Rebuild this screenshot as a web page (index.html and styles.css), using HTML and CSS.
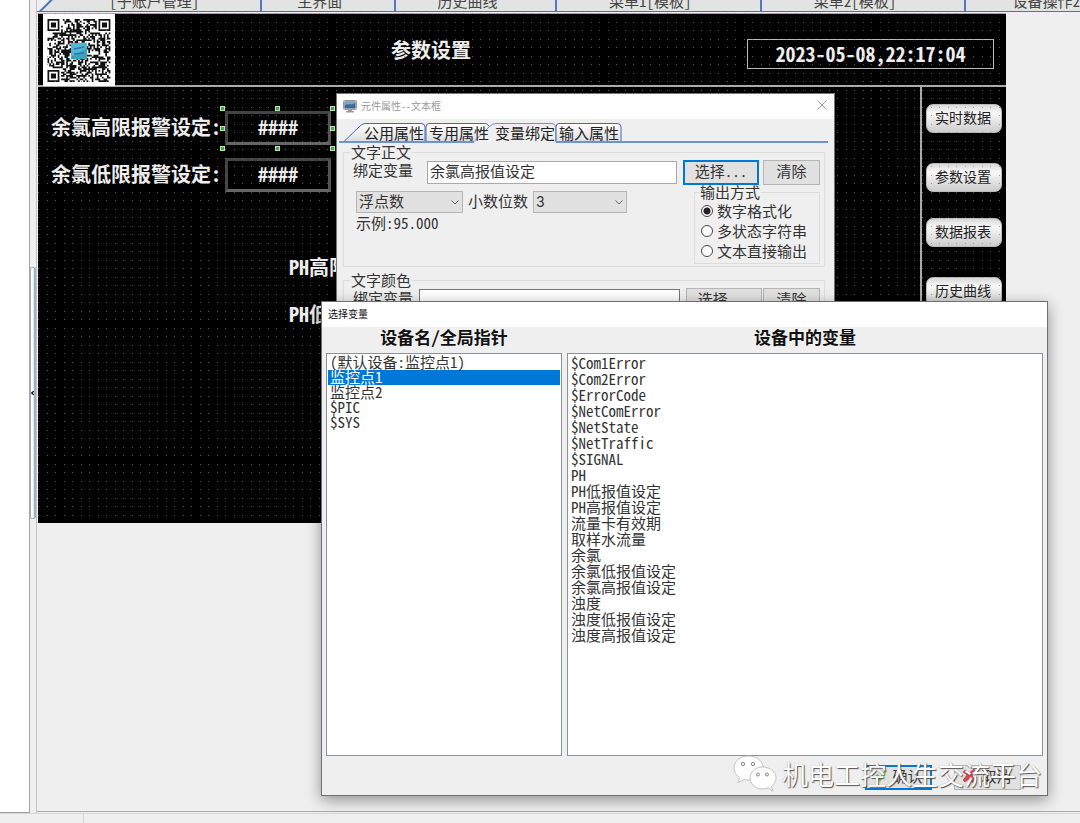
FILE: index.html
```html
<!DOCTYPE html>
<html lang="zh-CN">
<head>
<meta charset="utf-8">
<title>参数设置</title>
<link rel="stylesheet" href="styles.css">
</head>
<body>
<div class="app">
  <div class="workspace">
    <aside class="tree-panel"></aside>
    <div class="splitter"><div class="splitter-thumb"><svg width="5" height="8" viewBox="0 0 5 8"><path d="M4.500 1L1 4l3.500 3" fill="none" stroke="#000" stroke-width="1.800"/></svg></div></div>
    <main class="editor">
      <nav class="page-tabs">
        <a class="page-tab first" href="#">[子账户管理]</a>
        <a class="page-tab" href="#">主界面</a>
        <a class="page-tab" href="#">历史曲线</a>
        <a class="page-tab" href="#">菜单1[模板]</a>
        <a class="page-tab" href="#">菜单2[模板]</a>
        <a class="page-tab last" href="#">设备操作2</a>
      </nav>
      <section class="canvas">
        <header class="canvas-head">
          <svg class="qr" viewBox="0 0 72 72">
            <rect width="72" height="72" fill="#fff"/>
            <path id="qr-modules" transform="translate(4.500 5) scale(1.700)" fill="#111"/>
            <rect x="28" y="29" width="16" height="16" fill="#35a3c4"/>
            <path d="M28 29h16v5L28 43z" fill="#4fb9d3"/>
            <path d="M31 35l10-2M31 40l10-1" stroke="#3770b0" stroke-width="1.500"/>
            <rect x="29" y="42" width="1.500" height="1.500" fill="#d0437e"/>
          </svg>
          <h1 class="canvas-title">参数设置</h1>
          <time class="clock">2023-05-08,22:17:04</time>
        </header>
        <div class="canvas-body">
          <div class="fields">
            <div class="field"><span>余氯高限报警设定:</span>
              <output class="value">####
                <i class="handle t l"></i><i class="handle t c"></i><i class="handle t r"></i>
                <i class="handle m l"></i><i class="handle m r"></i>
                <i class="handle b l"></i><i class="handle b c"></i><i class="handle b r"></i>
              </output></div>
            <div class="field"><span>余氯低限报警设定:</span><output class="value">####</output></div>
            <div class="field ph"><span>PH高限报警设定:</span></div>
            <div class="field ph"><span>PH低限报警设定:</span></div>
          </div>
          <aside class="side-menu">
            <div class="side-group"><button class="side-btn">实时数据</button><button class="side-btn">参数设置</button></div>
            <div class="side-group"><button class="side-btn">数据报表</button><button class="side-btn">历史曲线</button></div>
          </aside>
        </div>
        <svg class="grid-dots" width="100%" height="100%" shape-rendering="crispEdges">
          <defs><pattern id="dots" width="17" height="17" patternUnits="userSpaceOnUse"><path d="M0 0h1v1h-1zM9 0h1v1h-1zM0 9h1v1h-1zM9 9h1v1h-1z" fill="#808080" fill-opacity=".7"/></pattern></defs>
          <rect width="100%" height="100%" fill="url(#dots)"/>
        </svg>
      </section>
    </main>
  </div>
  <footer class="statusbar"><span class="status-cell"></span></footer>
</div>

<section class="window props" aria-label="元件属性--文本框">
  <header class="titlebar muted">
    <svg width="14" height="13" viewBox="0 0 14 13"><rect x=".5" y=".5" width="13" height="9" rx="1" fill="#d8d8d8" stroke="#999"/><rect x="2" y="2" width="10" height="6" fill="#3f6f9f" stroke="#29496b" stroke-width=".7"/><path d="M2 5C5 3 8 5.500 12 3V2H2z" fill="#7fa6ca"/><path d="M5 10h4v1h2v1.500H3V11h2z" fill="#999"/></svg>
    <span>元件属性--文本框</span>
    <button class="close" aria-label="关闭"><svg width="10" height="10" viewBox="0 0 10 10"><path d="M.5.5l9 9M9.500.5l-9 9" stroke="#999" fill="none"/></svg></button>
  </header>
  <div class="tabstrip">
    <svg class="tab-shapes" width="492" height="21" viewBox="0 0 492 21">
      <defs><linearGradient id="tabfill" x2="0" y2="1"><stop offset="0" stop-color="#fff"/><stop offset="1" stop-color="#ddd"/></linearGradient></defs>
      <path d="M7 19L22 4Q25 .5 28 .5H84Q88 .5 88 4V19z" fill="url(#tabfill)"/>
      <path d="M89 19V4Q89 .5 92 .5H152L137 19z" fill="url(#tabfill)"/>
      <path d="M219 19V4Q219 .5 222 .5H280Q284 .5 284 4V19z" fill="url(#tabfill)"/>
      <path d="M2 18.500H7L22 4Q25 .5 28 .5H84Q88 .5 88 4V18.500M89 18.500V4Q89 .5 92 .5H149L152 3M219 18.500V4Q219 .5 222 .5H280Q284 .5 284 4V18.500" fill="none" stroke="#4169b5"/>
      <path d="M137 18.500L152 4Q155 .5 159 .5H214Q218.500 .5 218.500 4V18.500" fill="#efefef" stroke="#6f93d2"/>
      <path d="M2 19H137M219 19H491" stroke="#6f93cf" stroke-width="2"/>
    </svg>
    <button class="tab">公用属性</button><button class="tab">专用属性</button><button class="tab active">变量绑定</button><button class="tab">输入属性</button>
  </div>
  <div class="props-body">
    <fieldset class="group">
      <legend>文字正文</legend>
      <div class="bind-row">
        <label for="bind-text">绑定变量</label>
        <input id="bind-text" class="textbox" value="余氯高报值设定">
        <button class="btn choose focus">选择...</button>
        <button class="btn clear">清除</button>
      </div>
      <div class="format-row">
        <div class="format-left">
          <div class="select-row">
            <span class="combo wide"><select aria-label="数据类型"><option>浮点数</option></select><svg width="8" height="5" viewBox="0 0 8 5"><path d="M.5.5L4 4 7.500.5" fill="none" stroke="#666"/></svg></span>
            <label for="digits">小数位数</label>
            <span class="combo"><select id="digits" class="digits"><option>3</option></select><svg width="8" height="5" viewBox="0 0 8 5"><path d="M.5.5L4 4 7.500.5" fill="none" stroke="#666"/></svg></span>
          </div>
          <p class="sample">示例:95.000</p>
        </div>
        <fieldset class="group output">
          <legend>输出方式</legend>
          <label class="radio"><input type="radio" name="out" checked>数字格式化</label>
          <label class="radio"><input type="radio" name="out">多状态字符串</label>
          <label class="radio"><input type="radio" name="out">文本直接输出</label>
        </fieldset>
      </div>
    </fieldset>
    <fieldset class="group color">
      <legend>文字颜色</legend>
      <div class="bind-row">
        <label for="bind-color">绑定变量</label>
        <input id="bind-color" class="textbox">
        <button class="btn choose">选择...</button>
        <button class="btn clear">清除</button>
      </div>
    </fieldset>
  </div>
</section>

<section class="window picker" aria-label="选择变量">
  <header class="titlebar"><span>选择变量</span></header>
  <div class="picker-body">
    <h2 class="list-title">设备名/全局指针</h2>
    <h2 class="list-title">设备中的变量</h2>
    <ul class="listbox devices" role="listbox">
      <li>(默认设备:监控点1)</li><li class="selected">监控点1</li><li>监控点2</li><li>$PIC</li><li>$SYS</li>
    </ul>
    <ul class="listbox variables" role="listbox">
      <li>$Com1Error</li><li>$Com2Error</li><li>$ErrorCode</li><li>$NetComError</li><li>$NetState</li><li>$NetTraffic</li><li>$SIGNAL</li><li>PH</li><li>PH低报值设定</li><li>PH高报值设定</li><li>流量卡有效期</li><li>取样水流量</li><li>余氯</li><li>余氯低报值设定</li><li>余氯高报值设定</li><li>浊度</li><li>浊度低报值设定</li><li>浊度高报值设定</li>
    </ul>
  </div>
  <footer class="picker-foot">
    <button class="btn action focus"><svg width="14" height="14" viewBox="0 0 14 14"><path d="M1 7l3-2 2 3 5-7 2 1-7 11z" fill="#4fc34a"/></svg>确认</button>
    <button class="btn action"><svg width="14" height="14" viewBox="0 0 14 14"><path d="M2 1l4 3 5-4 2 3-4 4 4 4-3 3-4-4-4 3-2-2 4-5-4-3z" fill="#d64550" stroke="#b62f3b" stroke-width=".6"/></svg>取消</button>
  </footer>
  <div class="watermark">
    <svg width="44" height="38" viewBox="0 0 44 38">
      <g fill="#fff" stroke="#aaa" stroke-width=".7"><path d="M15 1C7 1 1 6.500 1 13c0 4 2 7 5.500 9.500L5 27.500l6-3q3 .8 7 .6C30 24 31 18 30 11 28 4 22 1 15 1z"/><path d="M29.500 12C22 12 17 17 17 23s5.500 11 12.500 11q3 0 5.500-1l5 3-1.500-4.500C41 29.500 43 26.500 43 23c0-6-6-11-13.500-11z"/></g>
      <g fill="#eee" stroke="#888"><circle cx="10" cy="9" r="1.700"/><circle cx="20" cy="9" r="1.700"/><circle cx="25" cy="19.500" r="1.500"/><circle cx="34" cy="19.500" r="1.500"/></g>
    </svg>
    <span>机电工控人生交流平台</span>
  </div>
</section>
<script src="qr.js"></script>
</body>
</html>
```

FILE: qr.js
```js
// Fills the code area with modules and three corner finders.
(function () {
  var n = 37, seed = 20230508, d = '';
  function rand() {
    seed = (seed + 0x6D2B79F5) | 0;
    var t = Math.imul(seed ^ (seed >>> 15), 1 | seed);
    t = (t + Math.imul(t ^ (t >>> 7), 61 | t)) ^ t;
    return ((t ^ (t >>> 14)) >>> 0) / 4294967296;
  }
  function finder(x, y, ox, oy) {
    var dx = x - ox, dy = y - oy;
    if (dx < -1 || dy < -1 || dx > 7 || dy > 7) return null;
    if (dx < 0 || dy < 0 || dx > 6 || dy > 6) return false;
    var r = Math.max(Math.abs(dx - 3), Math.abs(dy - 3));
    return r === 3 || r < 2;
  }
  for (var y = 0; y < n; y++) {
    for (var x = 0; x < n; x++) {
      var on = rand() > 0.48;
      var r = Math.max(Math.abs(x - n + 7), Math.abs(y - n + 7));
      if (r < 3) on = r !== 1;
      [[0, 0], [n - 7, 0], [0, n - 7]].forEach(function (p) {
        var f = finder(x, y, p[0], p[1]);
        if (f !== null) on = f;
      });
      if (on) d += 'M' + x + ' ' + y + 'h1v1h-1z';
    }
  }
  document.getElementById('qr-modules').setAttribute('d', d);
})();
```

FILE: styles.css
```css
* { box-sizing: border-box; }

body {
  margin: 0;
  height: 100vh;
  overflow: hidden;
  position: relative;
  background: #efefef;
  color: #333;
  font: 15px/16px "Noto Sans Mono CJK SC", "Noto Sans CJK SC", sans-serif;
}

button, input, select { font: inherit; color: inherit; }
h1, h2, p, ul { margin: 0; padding: 0; }
ul { list-style: none; }

.app { display: flex; flex-direction: column; height: 100%; }
.workspace { flex: 1; display: flex; min-height: 0; }
.tree-panel { width: 30px; background: #fff; border-right: 1px solid #a2a6b4; border-bottom: 1px solid #999; }
.splitter { width: 7px; border-right: 1px solid #c4c4c4; display: flex; flex-direction: column; padding-top: 267px; }
.splitter-thumb {
  height: 252px;
  border: 1px solid #aaa;
  border-right: 2px solid #9bb4c8;
  border-radius: 2px;
  background: linear-gradient(90deg, #fff 50%, #c8e2f2);
  display: flex;
  align-items: center;
}

.editor { flex: 1; min-width: 0; border-bottom: 1px solid #aaa; margin-bottom: 1px; }
.page-tabs {
  height: 12px;
  margin-bottom: 1px;
  overflow: hidden;
  display: grid;
  grid-template: 100% / 226fr 135fr 162fr 206fr 206fr 108fr;
  align-items: end;
  border-bottom: 1px solid #4c74ad;
  background: #e3e3e3;
}
.page-tab {
  height: 20px;
  padding-right: 16px;
  line-height: 20px;
  text-align: center;
  white-space: nowrap;
  color: #444;
  text-decoration: none;
  border-right: 2px solid #5578bd;
}
.page-tab.first { padding: 0 0 0 12px; background: linear-gradient(135deg, #efefef 15px, #4c74c5 16px, #4c74c5 17px, transparent 18px); }
.page-tab.last { padding: 0 0 0 46px; text-align: left; border: 0; }

.canvas {
  position: relative;
  height: 510px;
  margin: 0 74px 0 1px;
  background: #000;
  color: #eee;
  overflow: hidden;
}
.grid-dots { position: absolute; left: 0; top: 0; pointer-events: none; }
.canvas-head {
  display: flex;
  align-items: center;
  height: 74px;
  padding: 0 12px 0 5px;
  border-top: 1px solid #aaa;
  border-bottom: 2px solid #aaa;
}
.qr { width: 72px; height: 72px; }
.canvas-title { flex: 1; text-align: center; font-size: 20px; line-height: 24px; }
.clock {
  width: 247px;
  height: 30px;
  margin-top: 9px;
  border: 1px solid #bbb;
  text-align: center;
  font-size: 20px;
  line-height: 28px;
  font-weight: 700;
}
.canvas-body { display: flex; height: 436px; }
.fields { flex: 1; display: flex; flex-direction: column; padding: 24px 0 0 13px; font-size: 20px; font-weight: 700; }
.field { display: flex; align-items: center; gap: 4px; height: 34px; margin-bottom: 13px; white-space: nowrap; }
.field > span { min-width: 170px; padding-bottom: 2px; }
.field.ph { padding-left: 238px; }
.field.ph:nth-child(3) { margin-top: 46px; }
.value {
  position: relative;
  width: 106px;
  height: 34px;
  border: 3px solid;
  border-color: #444 #555 #666 #444;
  text-align: center;
  line-height: 26px;
}
.handle { position: absolute; width: 5px; height: 5px; background: #38b038; border: 1px solid #bde0bd; }
.handle.t { top: -8px; }
.handle.m { top: 12px; }
.handle.b { bottom: -9px; }
.handle.l { left: -8px; }
.handle.c { left: 47px; }
.handle.r { right: -7px; }

.side-menu { width: 86px; border-left: 2px solid #aaa; padding: 17px 4px 0 4px; display: flex; flex-direction: column; gap: 26px; }
.side-group { display: flex; flex-direction: column; gap: 30px; }
.side-btn {
  width: 76px;
  height: 29px;
  padding: 0 2px 4px 0;
  border: 1px solid #bbb;
  border-radius: 7px;
  background: linear-gradient(#d8d8d8, #f8f8f8 30%, #ccc);
  color: #222;
  font-size: 14px;
}

.statusbar { height: 10px; border-top: 1px solid #d8d8d8; display: flex; }
.status-cell { width: 84px; border-right: 1px solid #d5d5d5; }

/* Windows */
.window { position: absolute; background: #efefef; }
.titlebar { display: flex; align-items: center; height: 25px; padding: 0 6px; background: #fff; font-size: 10px; color: #111; }
.titlebar span { padding-bottom: 2px; }
.titlebar.muted { color: #999; gap: 4px; }
.close { margin-left: auto; padding: 0 1px 3px 0; border: 0; background: none; display: flex; }

.props { left: 336px; top: 93px; width: 499px; height: 230px; border: 1px solid #777; overflow: hidden; }
.tabstrip { position: relative; display: flex; height: 21px; margin-top: 4px; padding-left: 23px; }
.tab-shapes { position: absolute; left: 0; top: 0; }
.tab { position: relative; width: 65px; padding: 0 0 2px 4px; border: 0; background: none; text-align: left; color: #222; white-space: nowrap; }
.tab.active { padding-left: 5px; }
.props-body { padding: 1px 9px 0 6px; }
.group { margin: 0; padding: 0 4px 0 9px; min-width: 0; border: 1px solid #dcdcdc; }
.group legend { padding: 0 1px; margin-left: -3px; line-height: 14px; }
.bind-row { display: flex; align-items: center; height: 26px; padding-top: 1px; }
.bind-row label { width: 74px; margin-top: -6px; }
.textbox { flex: 1; min-width: 0; height: 23px; padding: 0 3px 5px 2px; border: 1px solid #aaa; background: #fff; margin-right: 6px; }
.btn { height: 25px; padding: 0 0 4px; border: 1px solid #b5b5b5; background: #e1e1e1; color: #333; white-space: nowrap; }
.btn.focus { border: 2px solid #0078d7; }
.choose { width: 76px; margin-right: 4px; }
.clear { width: 57px; }
.format-row { display: flex; justify-content: space-between; padding-bottom: 2px; }
.format-left { padding: 6px 0 0 3px; }
.select-row { display: flex; align-items: center; gap: 5px; }
.select-row label { padding-bottom: 2px; }
.combo { position: relative; display: block; width: 94px; height: 22px; }
.combo.wide { width: 107px; }
.combo select { appearance: none; display: block; width: 100%; height: 100%; padding: 0 3px 2px 2px; border: 1px solid #b5b5b5; border-radius: 0; background: #e1e1e1; }
.combo svg { position: absolute; right: 4px; top: 9px; pointer-events: none; }
.combo .digits { padding-bottom: 0; font-family: Inter, sans-serif; font-size: 14px; }
.sample { margin-top: 2px; }
.output { width: 126px; height: 79px; padding: 2px 0 0 6px; }
.output legend { margin-left: -2px; }
.radio { display: flex; align-items: center; gap: 4px; height: 20px; line-height: 18px; white-space: nowrap; }
.radio input { appearance: none; width: 12px; height: 12px; margin: 0; border: 1px solid #444; border-radius: 50%; background: #fff; }
.radio input:checked { background: radial-gradient(circle, #222 3px, #fff 4px); }
.group.color { height: 50px; margin-top: 6px; }
.color label { width: 66px; }
.color .textbox { border-color: #777; }
.color .choose { margin-right: 1px; }

.picker {
  left: 321px;
  right: 32px;
  top: 301px;
  bottom: 27px;
  display: flex;
  flex-direction: column;
  border: 1px solid #707070;
  box-shadow: 0 4px 14px rgba(0, 0, 0, .4);
}
.picker-body { flex: 1; min-height: 0; display: grid; grid-template: 26px 1fr / 236fr 476fr; column-gap: 5px; padding: 0 4px; }
.list-title { text-align: center; font-size: 17px; line-height: 20px; color: #111; }
.listbox { border: 1px solid #8c929c; background: #fff; padding: 1px; overflow: hidden; white-space: nowrap; }
.listbox li { padding: 0 2px; }
.devices li { height: 15px; line-height: 13px; }
.variables { padding-top: 2px; }
.variables li { height: 16px; line-height: 14px; }
.devices .selected { background: #0078d7; color: #fff; }
.picker-foot { display: flex; justify-content: flex-end; gap: 22px; height: 39px; padding: 9px 26px 0 0; }
.action { width: 67px; display: flex; align-items: center; justify-content: center; gap: 4px; }
.watermark {
  position: absolute;
  right: 5px;
  bottom: 2px;
  display: flex;
  align-items: center;
  gap: 5px;
  color: #fff;
  font-size: 26px;
  line-height: 38px;
  font-weight: 300;
  white-space: nowrap;
  text-shadow: 1px 1px 1px #555, 0 0 1px #999;
  pointer-events: none;
}
```
